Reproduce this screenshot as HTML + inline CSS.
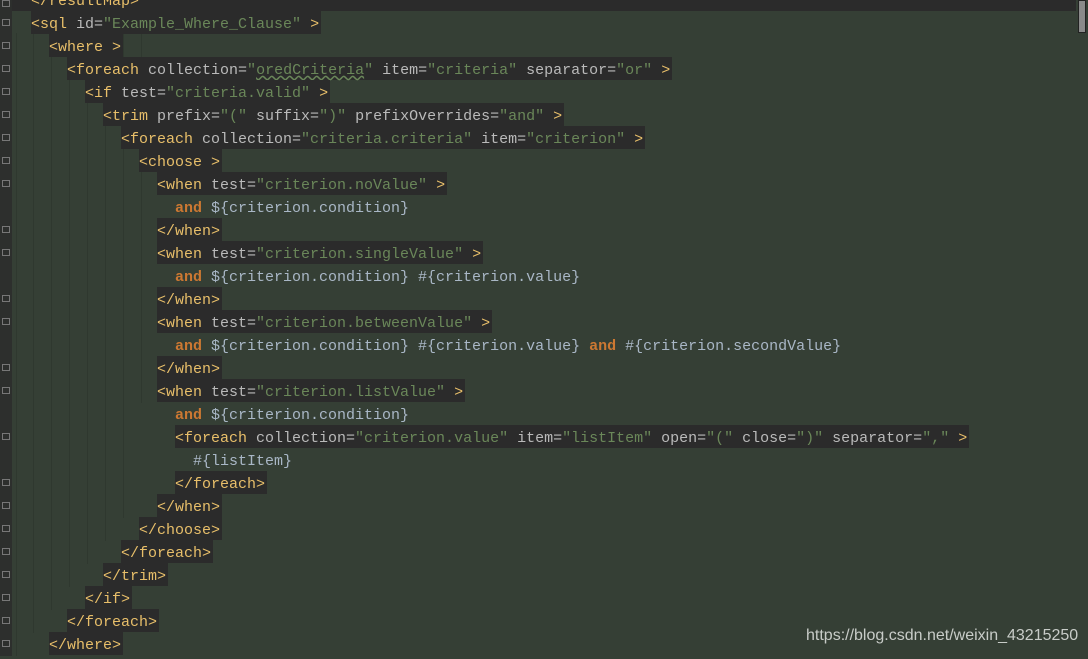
<!DOCTYPE html>
<html><head><meta charset="utf-8"><style>
html,body{margin:0;padding:0;width:1088px;height:656px;overflow:hidden;background:#353f35;}
#g{position:absolute;left:0;top:0;width:12px;height:656px;background:#2d2f2d;}
.l{position:absolute;left:0;height:23px;line-height:27px;font:15px/27px "Liberation Mono",monospace;white-space:pre;color:#a9b7c6;}
.h{background:#2b2b2b;display:inline-block;height:23px;vertical-align:top;padding-right:2px;}
.t{color:#e8bf6a}.a{color:#bababa}.v{color:#6a8759}.k{color:#cc7832;font-weight:bold}
.guide{position:absolute;top:33px;width:1px;background:#2f382f;}
.fm{position:absolute;left:2px;width:8px;height:7px;border:1px solid #777;box-sizing:border-box;}
</style></head><body>
<div style="position:absolute;left:0;top:0;width:1088px;height:11px;background:#2b2b2b"></div>
<div style="position:absolute;left:1076px;top:0;width:12px;height:656px;background:#353f35"></div>
<div style="position:absolute;left:1078px;top:0;width:8px;height:33px;background:#8a8a8a;border:1px solid #222;box-sizing:border-box"></div>
<div id="g"></div>
<div class="guide" style="left:16px;height:623px"></div>
<div class="guide" style="left:33px;height:600px"></div>
<div class="guide" style="left:51px;height:577px"></div>
<div class="guide" style="left:69px;height:554px"></div>
<div class="guide" style="left:87px;height:531px"></div>
<div class="guide" style="left:105px;height:508px"></div>
<div class="guide" style="left:123px;height:485px"></div>
<div class="guide" style="left:141px;height:370px"></div>

<div class="l" style="top:-12px;left:31px"><span class="h"><span class="t">&lt;/resultMap&gt;</span></span></div>
<div class="l" style="top:11px;left:31px"><span class="h"><span class="t">&lt;sql </span><span class="a">id=</span><span class="v">"Example_Where_Clause"</span><span class="t"> &gt;</span></span></div>
<div class="l" style="top:34px;left:49px"><span class="h"><span class="t">&lt;where &gt;</span></span></div>
<div class="l" style="top:57px;left:67px"><span class="h"><span class="t">&lt;foreach </span><span class="a">collection=</span><span class="v">"<span style="text-decoration:underline wavy #6a8759">oredCriteria</span>"</span><span class="a"> item=</span><span class="v">"criteria"</span><span class="a"> separator=</span><span class="v">"or"</span><span class="t"> &gt;</span></span></div>
<div class="l" style="top:80px;left:85px"><span class="h"><span class="t">&lt;if </span><span class="a">test=</span><span class="v">"criteria.valid"</span><span class="t"> &gt;</span></span></div>
<div class="l" style="top:103px;left:103px"><span class="h"><span class="t">&lt;trim </span><span class="a">prefix=</span><span class="v">"("</span><span class="a"> suffix=</span><span class="v">")"</span><span class="a"> prefixOverrides=</span><span class="v">"and"</span><span class="t"> &gt;</span></span></div>
<div class="l" style="top:126px;left:121px"><span class="h"><span class="t">&lt;foreach </span><span class="a">collection=</span><span class="v">"criteria.criteria"</span><span class="a"> item=</span><span class="v">"criterion"</span><span class="t"> &gt;</span></span></div>
<div class="l" style="top:149px;left:139px"><span class="h"><span class="t">&lt;choose &gt;</span></span></div>
<div class="l" style="top:172px;left:157px"><span class="h"><span class="t">&lt;when </span><span class="a">test=</span><span class="v">"criterion.noValue"</span><span class="t"> &gt;</span></span></div>
<div class="l" style="top:195px;left:175px"><span class="k">and</span> ${criterion.condition}</div>
<div class="l" style="top:218px;left:157px"><span class="h"><span class="t">&lt;/when&gt;</span></span></div>
<div class="l" style="top:241px;left:157px"><span class="h"><span class="t">&lt;when </span><span class="a">test=</span><span class="v">"criterion.singleValue"</span><span class="t"> &gt;</span></span></div>
<div class="l" style="top:264px;left:175px"><span class="k">and</span> ${criterion.condition} #{criterion.value}</div>
<div class="l" style="top:287px;left:157px"><span class="h"><span class="t">&lt;/when&gt;</span></span></div>
<div class="l" style="top:310px;left:157px"><span class="h"><span class="t">&lt;when </span><span class="a">test=</span><span class="v">"criterion.betweenValue"</span><span class="t"> &gt;</span></span></div>
<div class="l" style="top:333px;left:175px"><span class="k">and</span> ${criterion.condition} #{criterion.value} <span class="k">and</span> #{criterion.secondValue}</div>
<div class="l" style="top:356px;left:157px"><span class="h"><span class="t">&lt;/when&gt;</span></span></div>
<div class="l" style="top:379px;left:157px"><span class="h"><span class="t">&lt;when </span><span class="a">test=</span><span class="v">"criterion.listValue"</span><span class="t"> &gt;</span></span></div>
<div class="l" style="top:402px;left:175px"><span class="k">and</span> ${criterion.condition}</div>
<div class="l" style="top:425px;left:175px"><span class="h"><span class="t">&lt;foreach </span><span class="a">collection=</span><span class="v">"criterion.value"</span><span class="a"> item=</span><span class="v">"listItem"</span><span class="a"> open=</span><span class="v">"("</span><span class="a"> close=</span><span class="v">")"</span><span class="a"> separator=</span><span class="v">","</span><span class="t"> &gt;</span></span></div>
<div class="l" style="top:448px;left:193px">#{listItem}</div>
<div class="l" style="top:471px;left:175px"><span class="h"><span class="t">&lt;/foreach&gt;</span></span></div>
<div class="l" style="top:494px;left:157px"><span class="h"><span class="t">&lt;/when&gt;</span></span></div>
<div class="l" style="top:517px;left:139px"><span class="h"><span class="t">&lt;/choose&gt;</span></span></div>
<div class="l" style="top:540px;left:121px"><span class="h"><span class="t">&lt;/foreach&gt;</span></span></div>
<div class="l" style="top:563px;left:103px"><span class="h"><span class="t">&lt;/trim&gt;</span></span></div>
<div class="l" style="top:586px;left:85px"><span class="h"><span class="t">&lt;/if&gt;</span></span></div>
<div class="l" style="top:609px;left:67px"><span class="h"><span class="t">&lt;/foreach&gt;</span></span></div>
<div class="l" style="top:632px;left:49px"><span class="h"><span class="t">&lt;/where&gt;</span></span></div>

<div class="fm" style="top:0px"></div>
<div class="fm" style="top:19px"></div>
<div class="fm" style="top:42px"></div>
<div class="fm" style="top:65px"></div>
<div class="fm" style="top:88px"></div>
<div class="fm" style="top:111px"></div>
<div class="fm" style="top:134px"></div>
<div class="fm" style="top:157px"></div>
<div class="fm" style="top:180px"></div>
<div class="fm" style="top:226px"></div>
<div class="fm" style="top:249px"></div>
<div class="fm" style="top:295px"></div>
<div class="fm" style="top:318px"></div>
<div class="fm" style="top:364px"></div>
<div class="fm" style="top:387px"></div>
<div class="fm" style="top:433px"></div>
<div class="fm" style="top:479px"></div>
<div class="fm" style="top:502px"></div>
<div class="fm" style="top:525px"></div>
<div class="fm" style="top:548px"></div>
<div class="fm" style="top:571px"></div>
<div class="fm" style="top:594px"></div>
<div class="fm" style="top:617px"></div>
<div class="fm" style="top:640px"></div>

<div style="position:absolute;left:806px;top:627px;font:16px 'Liberation Sans',sans-serif;color:#c8ccc8">https://blog.csdn.net/weixin_43215250</div>
</body></html>
